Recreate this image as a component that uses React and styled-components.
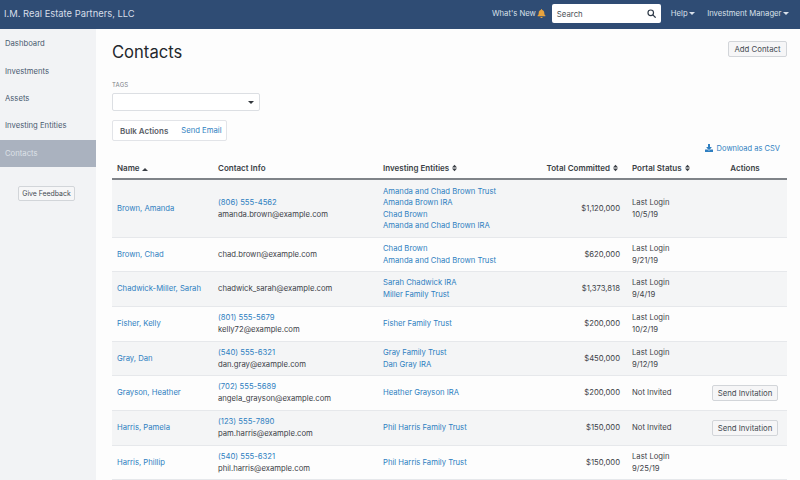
import React from "react";
import styled, { createGlobalStyle } from "styled-components";

const Global = createGlobalStyle`
  html, body {
    margin: 0;
    padding: 0;
    height: 480px;
    overflow: hidden;
    background: #fdfdfd;
    font-family: Inter, "Liberation Sans", sans-serif;
    font-size: 8px;
    color: #33383d;
  }
  * { box-sizing: border-box; }
`;

const Page = styled.div`
  width: 800px;
  height: 480px;
  display: flex;
  flex-direction: column;
  overflow: hidden;
`;

const TopBar = styled.header`
  height: 29px;
  flex: none;
  display: flex;
  align-items: center;
  padding: 0 11.5px 2px 4px;
  background: #2f4c74;
  color: #dfe5ee;
`;

const Brand = styled.div`
  font-size: 9.4px;
  color: #d6dee9;
  flex: 1;
`;

const NavText = styled.span`
  display: inline-flex;
  align-items: center;
  gap: 1px;
  font-size: 7.7px;
  color: #d9e0ea;
  margin-left: ${p => p.$gap || 0}px;
`;

const Caret = styled.i`
  display: inline-block;
  border-left: 3px solid transparent;
  border-right: 3px solid transparent;
  border-${p => (p.$up ? "bottom" : "top")}: 3px solid currentColor;
  margin-left: ${p => p.$gap || 0}px;
`;

const SearchBox = styled.div`
  width: 109px;
  height: 19px;
  margin: 0 10px 0 6px;
  padding: 0 5px;
  display: flex;
  align-items: center;
  justify-content: space-between;
  background: #fff;
  border-radius: 2px;
  color: #4b5157;
  font-size: 7.8px;
`;

const Body = styled.div`
  flex: 1;
  display: flex;
  min-height: 0;
`;

const Sidebar = styled.nav`
  width: 96px;
  flex: none;
  padding-top: 1px;
  background: #f2f3f5;
  display: flex;
  flex-direction: column;
`;

const SideItem = styled.div`
  height: 27.4px;
  padding-left: 5px;
  display: flex;
  align-items: center;
  font-size: 7.7px;
  color: ${p => (p.$active ? "#dde1e7" : "#4a5a70")};
  background: ${p => (p.$active ? "#aab2bf" : "transparent")};
`;

const Button = styled.button`
  font-family: inherit;
  font-size: ${p => p.$size || 7.8}px;
  color: #454b52;
  background: #f6f6f7;
  border: 1px solid #d2d5d9;
  border-radius: 2px;
  padding: 0;
  width: ${p => p.$w}px;
  height: ${p => p.$h}px;
  white-space: nowrap;
`;

const FeedbackWrap = styled.div`
  margin-top: 19px;
  padding-left: 18px;
  display: flex;
`;

const Main = styled.main`
  flex: 1;
  min-width: 0;
  padding: 12px 13px 0 16px;
`;

const HeadRow = styled.div`
  display: flex;
  justify-content: space-between;
  align-items: flex-start;
`;

const Title = styled.h1`
  margin: -1px 0 1px;
  font-size: 16.6px;
  font-weight: 400;
  line-height: 24px;
  color: #24282c;
`;

const TagLabel = styled.div`
  margin-top: 16px;
  font-size: 6px;
  line-height: 8px;
  letter-spacing: 0.2px;
  color: #7b8087;
`;

const TagSelect = styled.div`
  width: 148px;
  height: 18px;
  margin-top: 4px;
  padding-right: 5px;
  display: flex;
  align-items: center;
  justify-content: flex-end;
  background: #fff;
  border: 1px solid #dcdfe3;
  border-radius: 2px;
  color: #33383d;
`;

const BulkBar = styled.div`
  display: flex;
  width: 115px;
  align-items: center;
  height: 21px;
  margin-top: 9px;
  padding: 0 4px 0 7px;
  gap: 13px;
  background: #fff;
  border: 1px solid #e2e4e8;
  border-radius: 2px;
`;

const BulkTitle = styled.span`
  font-size: 8px;
  font-weight: 600;
  color: #5a6067;
`;

const Link = styled.a`
  color: #2f7fc1;
  text-decoration: none;
  font-size: 7.7px;
`;

const DownloadRow = styled.div`
  display: flex;
  justify-content: flex-end;
  align-items: center;
  height: 12px;
  margin-top: 1px;
  padding-right: 7px;
`;

const DownloadLink = styled(Link)`
  display: inline-flex;
  align-items: center;
  gap: 4px;
  font-size: 7.5px;
`;

const Table = styled.table`
  width: 675px;
  margin-top: 3px;
  border-collapse: collapse;
  table-layout: fixed;
`;

const Th = styled.th`
  height: 22px;
  padding: ${p => (p.$align === "right" ? "0 9px 0 5px" : "0 5px")};
  font-size: 8px;
  font-weight: 600;
  color: #3a3f45;
  white-space: nowrap;
  text-align: ${p => p.$align || "left"};
  border-bottom: 2px solid #7f8388;
`;

const Row = styled.tr`
  height: ${p => p.$h}px;
  background: ${p => (p.$odd ? "#f4f5f6" : "#fdfdfd")};
  border-bottom: 1px solid #e6e8eb;
`;

const Td = styled.td`
  padding: ${p => (p.$align === "right" ? "1px 7px 0 5px" : "1px 5px 0")};
  font-size: 7.7px;
  line-height: 11.6px;
  color: #3d4248;
  white-space: nowrap;
  text-align: ${p => p.$align || "left"};
`;

const Stack = styled.div`
  display: flex;
  flex-direction: column;
`;

const Bell = () => (
  <svg width="9" height="9" viewBox="0 0 448 512" fill="#e8a33d">
    <path d="M224 512c35 0 64-29 64-64H160c0 35 29 64 64 64zm215-150c-19-21-56-52-56-154 0-78-54-140-127-155V32a32 32 0 1 0-64 0v21C119 68 65 130 65 208c0 102-37 133-56 154-6 6-9 14-9 22 0 16 13 32 32 32h384c19 0 32-16 32-32 0-8-3-16-9-22z" />
  </svg>
);

const SearchIcon = () => (
  <svg width="9" height="9" viewBox="0 0 12 12" fill="none" stroke="#2f3a48" strokeWidth="1.6">
    <circle cx="5" cy="5" r="3.7" />
    <path d="M7.8 7.8 11 11" strokeLinecap="round" />
  </svg>
);

const DownloadIcon = () => (
  <svg width="8" height="8" viewBox="0 0 512 512" fill="#2f7fc1">
    <path d="M216 0h80c13 0 24 11 24 24v168h88c18 0 27 21 14 34L270 378c-7 7-20 7-27 0L90 226c-13-13-4-34 14-34h88V24c0-13 11-24 24-24zm296 376v112c0 13-11 24-24 24H24c-13 0-24-11-24-24V376c0-13 11-24 24-24h147l49 49c20 20 52 20 72 0l49-49h147c13 0 24 11 24 24z" />
  </svg>
);

const Sort = () => (
  <svg width="5" height="8" viewBox="0 0 6 8" fill="currentColor" style={{ marginLeft: 3, verticalAlign: "-1px" }}>
    <path d="M3 0 6 3.3H0zM3 8 0 4.7h6z" />
  </svg>
);

const contacts = [
  { name: "Brown, Amanda", phone: "(806) 555-4562", email: "amanda.brown@example.com", entities: ["Amanda and Chad Brown Trust", "Amanda Brown IRA", "Chad Brown", "Amanda and Chad Brown IRA"], total: "$1,120,000", login: "10/5/19", h: 58 },
  { name: "Brown, Chad", email: "chad.brown@example.com", entities: ["Chad Brown", "Amanda and Chad Brown Trust"], total: "$620,000", login: "9/21/19", h: 34 },
  { name: "Chadwick-Miller, Sarah", email: "chadwick_sarah@example.com", entities: ["Sarah Chadwick IRA", "Miller Family Trust"], total: "$1,373,818", login: "9/4/19", h: 35 },
  { name: "Fisher, Kelly", phone: "(801) 555-5679", email: "kelly72@example.com", entities: ["Fisher Family Trust"], total: "$200,000", login: "10/2/19", h: 35 },
  { name: "Gray, Dan", phone: "(540) 555-6321", email: "dan.gray@example.com", entities: ["Gray Family Trust", "Dan Gray IRA"], total: "$450,000", login: "9/12/19", h: 34 },
  { name: "Grayson, Heather", phone: "(702) 555-5689", email: "angela_grayson@example.com", entities: ["Heather Grayson IRA"], total: "$200,000", h: 35 },
  { name: "Harris, Pamela", phone: "(123) 555-7890", email: "pam.harris@example.com", entities: ["Phil Harris Family Trust"], total: "$150,000", h: 35 },
  { name: "Harris, Phillip", phone: "(540) 555-6321", email: "phil.harris@example.com", entities: ["Phil Harris Family Trust"], total: "$150,000", login: "9/25/19", h: 34 },
];

const sideItems = ["Dashboard", "Investments", "Assets", "Investing Entities", "Contacts"];

export default function App() {
  return (
    <Page>
      <Global />
      <TopBar>
        <Brand>I.M. Real Estate Partners, LLC</Brand>
        <NavText>What's New <Bell /></NavText>
        <SearchBox>
          Search
          <SearchIcon />
        </SearchBox>
        <NavText>Help<Caret /></NavText>
        <NavText $gap={12.5}>Investment Manager<Caret /></NavText>
      </TopBar>
      <Body>
        <Sidebar>
          {sideItems.map(item => (
            <SideItem key={item} $active={item === "Contacts"}>{item}</SideItem>
          ))}
          <FeedbackWrap>
            <Button $w={57} $h={15} $size={6.9}>Give Feedback</Button>
          </FeedbackWrap>
        </Sidebar>
        <Main>
          <HeadRow>
            <Title>Contacts</Title>
            <Button $w={59} $h={16}>Add Contact</Button>
          </HeadRow>
          <TagLabel>TAGS</TagLabel>
          <TagSelect><Caret /></TagSelect>
          <BulkBar>
            <BulkTitle>Bulk Actions</BulkTitle>
            <Link>Send Email</Link>
          </BulkBar>
          <DownloadRow>
            <DownloadLink><DownloadIcon />Download as CSV</DownloadLink>
          </DownloadRow>
          <Table>
            <colgroup>
              <col style={{ width: 101 }} />
              <col style={{ width: 165 }} />
              <col style={{ width: 147 }} />
              <col style={{ width: 102 }} />
              <col style={{ width: 76 }} />
              <col style={{ width: 84 }} />
            </colgroup>
            <thead>
              <tr>
                <Th>Name<Caret $up $gap={2} /></Th>
                <Th>Contact Info</Th>
                <Th>Investing Entities<Sort /></Th>
                <Th $align="right">Total Committed<Sort /></Th>
                <Th>Portal Status<Sort /></Th>
                <Th $align="center">Actions</Th>
              </tr>
            </thead>
            <tbody>
              {contacts.map((c, i) => (
                <Row key={c.name} $odd={i % 2 === 0} $h={c.h}>
                  <Td><Link>{c.name}</Link></Td>
                  <Td>
                    <Stack>
                      {c.phone && <Link>{c.phone}</Link>}
                      <span>{c.email}</span>
                    </Stack>
                  </Td>
                  <Td>
                    <Stack>
                      {c.entities.map(e => <Link key={e}>{e}</Link>)}
                    </Stack>
                  </Td>
                  <Td $align="right">{c.total}</Td>
                  <Td>
                    {c.login ? <Stack><span>Last Login</span><span>{c.login}</span></Stack> : "Not Invited"}
                  </Td>
                  <Td $align="center">
                    {!c.login && <Button $w={66} $h={16}>Send Invitation</Button>}
                  </Td>
                </Row>
              ))}
            </tbody>
          </Table>
        </Main>
      </Body>
    </Page>
  );
}
